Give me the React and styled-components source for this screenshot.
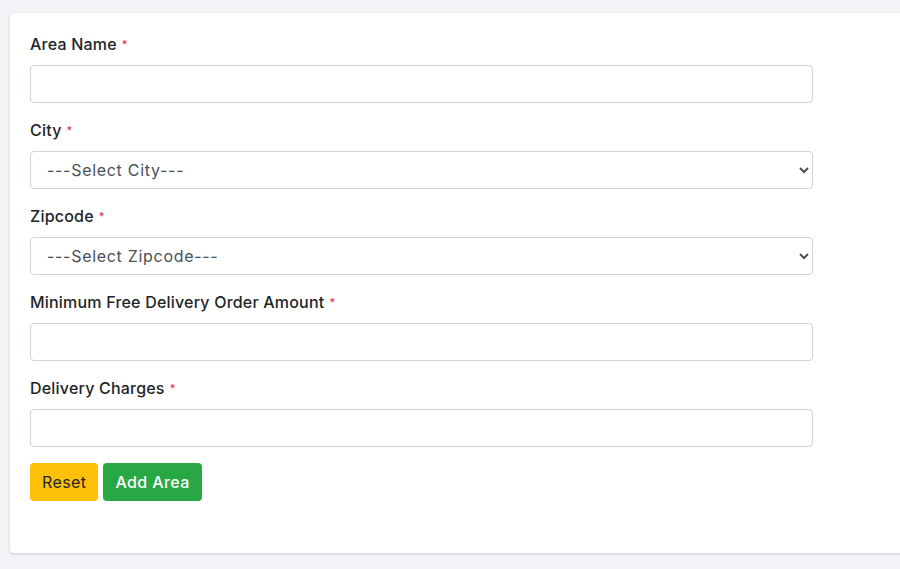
import React from 'react'
import styled, { createGlobalStyle } from 'styled-components'

const GlobalStyle = createGlobalStyle`
  html, body {
    margin: 0;
    padding: 0;
    background: #f3f4f7;
    overflow: hidden;
    font-family: Inter, "Noto Sans", sans-serif;
  }
`

const Page = styled.div`
  padding: 13px 0 16px 10px;
  min-height: 569px;
  box-sizing: border-box;
`

const Card = styled.div`
  width: 920px;
  background: #fff;
  border-radius: 4px;
  box-shadow: 0 1px 3px rgba(0, 0, 0, 0.18);
  padding: 20px 20px 52px 20px;
  box-sizing: border-box;
`

const Field = styled.div`
  width: 783px;
  margin-bottom: 16px;
`

const Label = styled.label`
  display: block;
  height: 22px;
  font-size: 16px;
  font-weight: 500;
  line-height: 22px;
  color: #212529;
  margin-bottom: 10px;
  letter-spacing: 0.2px;
`

const Req = styled.span`
  color: #dc3545;
  font-size: 11px;
  line-height: 0;
  margin-left: 5px;
  vertical-align: 2px;
`

const Input = styled.input`
  display: block;
  width: 100%;
  height: 38px;
  box-sizing: border-box;
  border: 1px solid #ced4da;
  border-radius: 4px;
  padding: 0 16px;
  font-size: 15px;
  font-family: inherit;
  background: #fff;
`

const Select = styled.select`
  display: block;
  width: 100%;
  height: 38px;
  box-sizing: border-box;
  border: 1px solid #ced4da;
  border-radius: 4px;
  padding: 0 8px 0 12px;
  font-size: 16px;
  font-family: inherit;
  color: #495057;
  background: #fff;
  letter-spacing: 0.7px;
`

const Actions = styled.div`
  display: flex;
  gap: 5px;
`

const Button = styled.button`
  height: 38px;
  border: none;
  border-radius: 4px;
  padding: 0 12px;
  font-family: inherit;
  font-size: 16px;
  letter-spacing: 0.4px;
  font-weight: ${p => (p.$primary ? 500 : 400)};
  background: ${p => (p.$primary ? '#28a745' : '#ffc107')};
  color: ${p => (p.$primary ? '#fff' : '#212529')};
  cursor: pointer;
`

const fields = [
  { label: 'Area Name', type: 'input' },
  { label: 'City', type: 'select', placeholder: '---Select City---' },
  { label: 'Zipcode', type: 'select', placeholder: '---Select Zipcode---' },
  { label: 'Minimum Free Delivery Order Amount', type: 'input' },
  { label: 'Delivery Charges', type: 'input' },
]

export default function App() {
  return (
    <Page>
      <GlobalStyle />
      <Card>
        {fields.map(f => (
          <Field key={f.label}>
            <Label>
              {f.label}
              <Req>*</Req>
            </Label>
            {f.type === 'input' ? (
              <Input type="text" />
            ) : (
              <Select defaultValue="">
                <option value="">{f.placeholder}</option>
              </Select>
            )}
          </Field>
        ))}
        <Actions>
          <Button type="reset">Reset</Button>
          <Button $primary>Add Area</Button>
        </Actions>
      </Card>
    </Page>
  )
}
